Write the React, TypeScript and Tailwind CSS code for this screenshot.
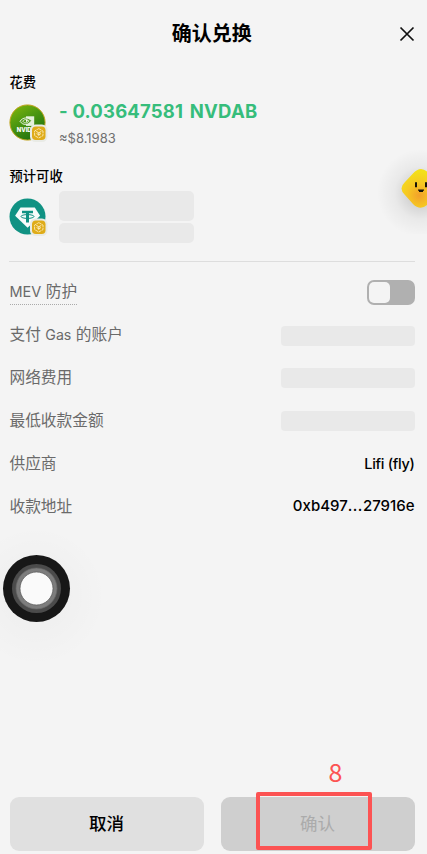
import type { ReactNode } from 'react'

function ChainBadge() {
  return (
    <g>
      <rect x="21" y="20.500" width="17.5" height="17.5" rx="5.5" fill="#e9ebe6" />
      <rect x="23" y="22.500" width="13.5" height="13.5" rx="3.8" fill="#dfac19" />
      <path
        d="M29.8 24.6 34 27V31.600L29.8 34 25.600 31.600V27Z"
        fill="none"
        stroke="#fff3cb"
        strokeWidth=".8"
        strokeDasharray="3.2 .6"
      />
      <path
        d="m27.300 27.400 2.500 1.400 2.500-1.400M29.8 28.8v3M27.600 29.500l2.200 1.300 2.200-1.300"
        fill="none"
        stroke="#fff3cb"
        strokeWidth=".9"
      />
    </g>
  )
}

function NvidiaIcon() {
  return (
    <svg viewBox="0 0 39 39" className="size-[39px] shrink-0">
      <defs>
        <linearGradient id="nv" x1="0" y1="0" x2=".6" y2="1">
          <stop offset="0" stopColor="#86b80b" />
          <stop offset=".5" stopColor="#4b9710" />
          <stop offset="1" stopColor="#21710e" />
        </linearGradient>
      </defs>
      <circle cx="18.5" cy="18.5" r="17.6" fill="url(#nv)" stroke="#c2a51e" strokeWidth="1" />
      <path d="M17 12.3h8.200v9.600H17Z" fill="#e4f0da" />
      <path d="M11 17.300c2.800-4.400 8.400-4.300 11.600-.5-3.200 4.700-8.500 5-11.600.5Z" fill="#5a9e27" stroke="#f4f9ef" strokeWidth=".9" />
      <path d="M13.800 17.200c1.600-2.200 4.500-2.100 6.100-.2-1.400 2.300-4.400 2.600-6.100.2Z" fill="#4b9710" stroke="#f4f9ef" strokeWidth=".8" />
      <path d="M17 15.700c1 0 1.600.5 2 1.100l-1.800 1.400Z" fill="#fff" />
      <text x="7.800" y="28.200" fontSize="5.800" fontWeight="800" fill="#fff" className="font-['Inter',sans-serif]">
        NVID
      </text>
      <ChainBadge />
    </svg>
  )
}

function TetherIcon() {
  return (
    <svg viewBox="0 0 39 39" className="size-[39px] shrink-0">
      <circle cx="18.5" cy="18.5" r="18" fill="#109283" />
      <path d="M11.5 9.5h14.300l5.300 8.200-12.500 12.100L6.100 17.700Z" fill="#f7fbfa" />
      <path d="M13 12.700h11v2.500h-4v9.300h-3v-9.300h-4Z" fill="#109283" />
      <ellipse cx="18.5" cy="18.500" rx="6.500" ry="1.900" fill="none" stroke="#109283" strokeWidth="1" />
      <ChainBadge />
    </svg>
  )
}

function Mascot() {
  return (
    <svg viewBox="0 0 87 90" className="absolute top-[144px] right-0 h-[90px] w-[87px]">
      <defs>
        <radialGradient id="face" cx=".45" cy=".68" r=".62">
          <stop offset="0" stopColor="#f2a02b" />
          <stop offset=".5" stopColor="#f6c822" />
          <stop offset="1" stopColor="#f3e01a" />
        </radialGradient>
        <radialGradient id="halo">
          <stop offset=".3" stopColor="#000" stopOpacity=".13" />
          <stop offset=".6" stopColor="#000" stopOpacity=".045" />
          <stop offset="1" stopColor="#000" stopOpacity="0" />
        </radialGradient>
      </defs>
      <circle cx="81" cy="49" r="44" fill="url(#halo)" />
      <path
        d="M73 29.500Q81 20.500 89 29.500L98 37Q104 44 98 51L89 59Q81 68 73 60L65 51Q58 44.500 65 38Z"
        fill="url(#face)"
      />
      <path d="M75 38.300h2v5h-2ZM85 38.300h2v5h-2Z" fill="#171407" />
      <path d="M78 45.500h6v1.200h-1v1.300h-4v-1.300h-1Z" fill="#171407" />
    </svg>
  )
}

function TouchDot() {
  return (
    <svg viewBox="0 0 160 160" className="absolute top-[508px] left-[-44px] size-40">
      <defs>
        <radialGradient id="shade">
          <stop offset=".4" stopColor="#000" stopOpacity=".018" />
          <stop offset="1" stopColor="#000" stopOpacity="0" />
        </radialGradient>
      </defs>
      <circle cx="80" cy="88" r="70" fill="url(#shade)" />
      <circle cx="80.500" cy="80.500" r="33.500" fill="#171717" />
      <circle cx="80.500" cy="80.500" r="24.500" fill="#4b4b4b" />
      <circle cx="80.500" cy="80.500" r="20.500" fill="#7d7d7d" stroke="#686868" strokeWidth=".7" />
      <circle cx="80.500" cy="80.500" r="16.500" fill="#fafafa" stroke="#555" strokeWidth=".7" />
    </svg>
  )
}

function Row({ label, children }: { label: ReactNode; children: ReactNode }) {
  return (
    <div className="flex h-[42.8px] items-center justify-between">
      <span className="pt-[.5px] pl-[.5px] text-[15.7px] leading-6 text-[#6a6a6a]">{label}</span>
      {children}
    </div>
  )
}

function Skeleton() {
  return <div className="mt-[1px] h-5 w-[134px] rounded-[4px] bg-[#e9e9e9]" />
}

export default function App() {
  return (
    <main className="relative flex h-[854px] w-[427px] flex-col overflow-hidden bg-[#f4f4f4] pr-[12.500px] pl-[9px] font-['Inter','Noto_Sans_CJK_SC',sans-serif] text-black">
      <header className="grid h-[66px] shrink-0 grid-cols-[24px_1fr_24px] items-center">
        <span />
        <h1 className="pt-[2px] text-center text-[20px] leading-7 font-bold">确认兑换</h1>
        <button className="flex justify-end pt-px" aria-label="关闭">
          <svg viewBox="0 0 16 16" className="size-4">
            <path d="m1.500 1.500 13 13M14.500 1.500l-13 13" stroke="#111" strokeWidth="1.700" />
          </svg>
        </button>
      </header>

      <section className="h-[94px] shrink-0 pt-1.5">
        <h2 className="pl-[.5px] text-[13.300px] leading-5 font-medium">花费</h2>
        <div className="flex gap-[11px] pt-1.5">
          <div className="pt-[5.500px]">
            <NvidiaIcon />
          </div>
          <div>
            <p className="text-[18.500px] leading-[26px] font-bold tracking-[.19px] whitespace-nowrap text-[#36bd7b]">
              - 0.03647581 <span className="ml-[2px]">NVDAB</span>
            </p>
            <p className="pt-[4px] text-[13px] leading-5 text-[#707070]">≈$8.1983</p>
          </div>
        </div>
      </section>

      <section className="h-[101px] shrink-0 pt-1.5">
        <h2 className="pl-[.5px] text-[13.300px] leading-5 font-medium">预计可收</h2>
        <div className="flex gap-[11px] pt-[5px]">
          <div className="pt-[7px]">
            <TetherIcon />
          </div>
          <div className="flex flex-col gap-[2.500px]">
            <div className="h-[29.500px] w-[135px] rounded-[5px] bg-[#e9e9e9]" />
            <div className="h-5 w-[135px] rounded-[5px] bg-[#e9e9e9]" />
          </div>
        </div>
      </section>

      <section className="border-t border-[#dddddd] pt-[9px]">
        <Row
          label={
            <span className="inline-block border-b border-dotted border-[#aaa]">
              <span className="text-[14.500px]">MEV</span> 防护
            </span>
          }
        >
          <div className="h-[25px] w-[48px] rounded-[7px] bg-[#b0b0b0] p-[2px]">
            <div className="size-[21px] rounded-[5px] bg-[#f4f4f4]" />
          </div>
        </Row>
        <Row label={<>支付 <span className="text-[14.200px]">Gas</span> 的账户</>}>
          <Skeleton />
        </Row>
        <Row label="网络费用">
          <Skeleton />
        </Row>
        <Row label="最低收款金额">
          <Skeleton />
        </Row>
        <Row label="供应商">
          <span className="text-[14.500px] font-medium tracking-[-.3px]">Lifi (fly)</span>
        </Row>
        <Row label="收款地址">
          <span className="text-[15px] font-medium">
            0xb497<span className="tracking-[.5px]">...</span>27916e
          </span>
        </Row>
      </section>

      <footer className="mt-auto mb-[3px] grid grid-cols-2 gap-[17px] pl-[.5px]">
        <button className="h-[54px] rounded-[9px] bg-[#e0e0e0] text-[17.500px] font-medium">取消</button>
        <button className="relative h-[54px] rounded-[9px] bg-[#cfcfcf] text-[17.500px] text-[#ababab]">
          确认
          <span className="absolute -top-[5px] left-[35px] h-[58px] w-[116px] rounded-[2px] border-4 border-[#fc5353]" />
          <span className="absolute -top-[41px] left-[108px] font-['Noto_Sans_CJK_SC',sans-serif] text-[25px] leading-[30px] text-[#fc5353]">8</span>
        </button>
      </footer>

      <Mascot />
      <TouchDot />
    </main>
  )
}
